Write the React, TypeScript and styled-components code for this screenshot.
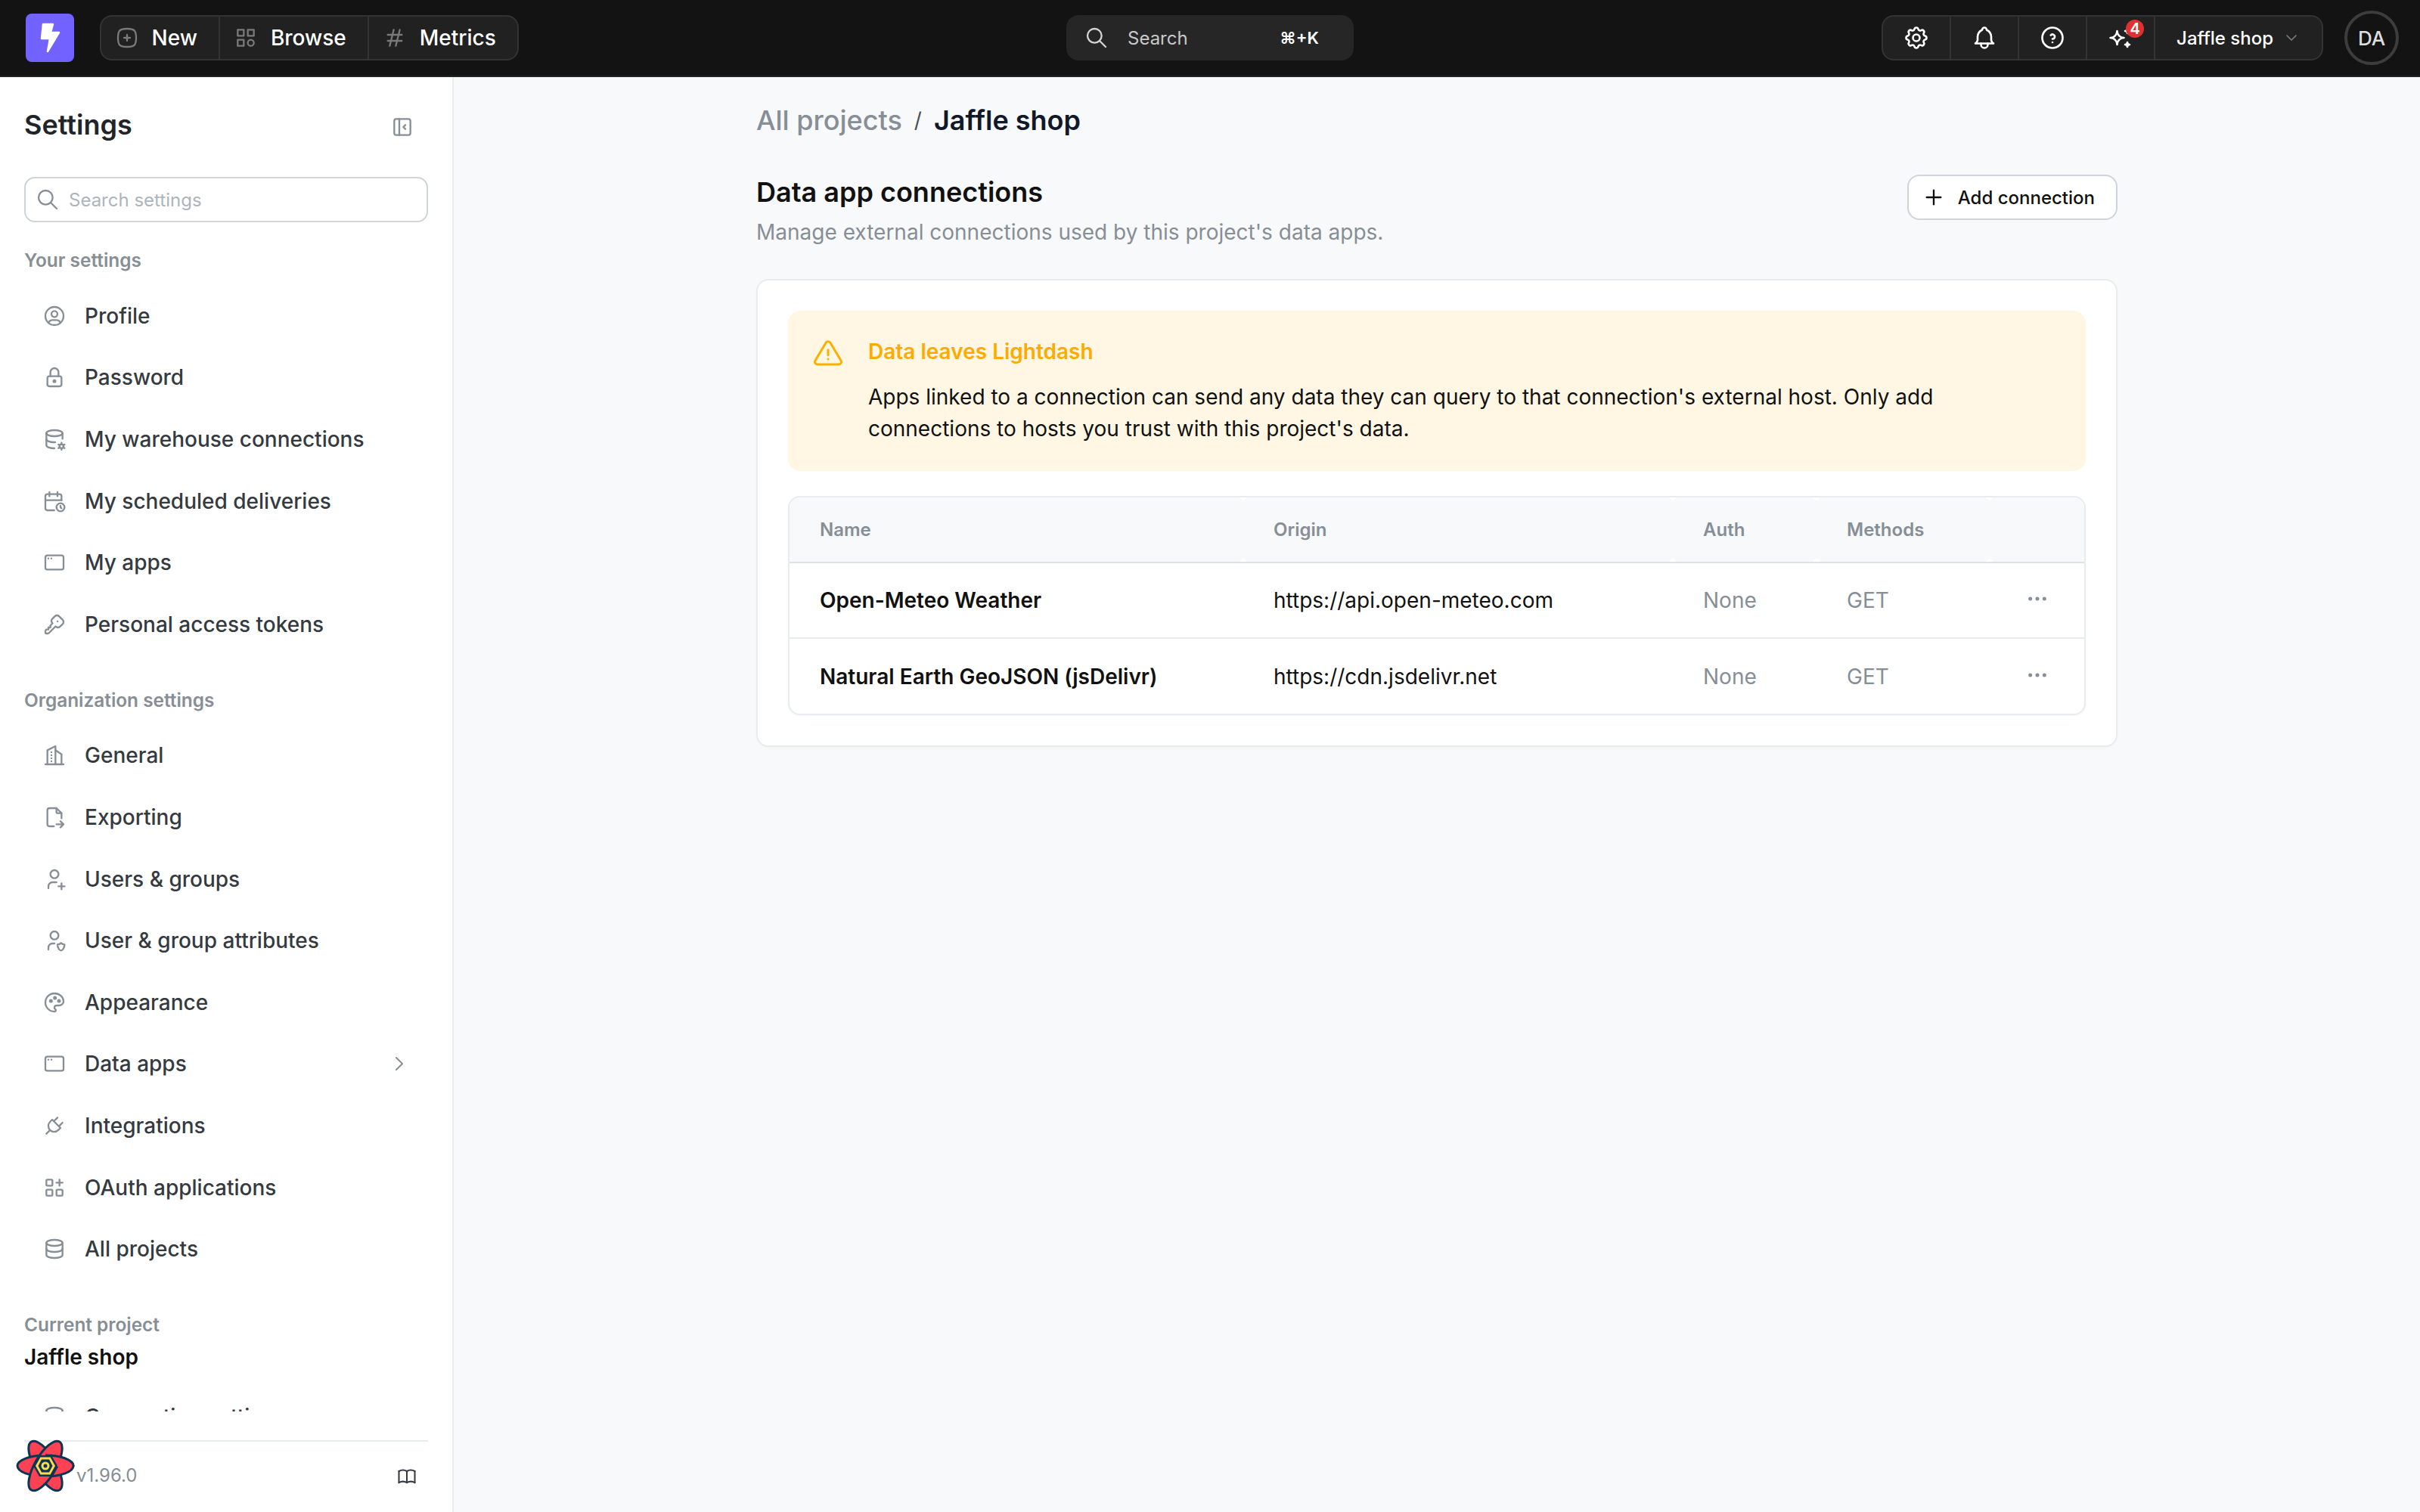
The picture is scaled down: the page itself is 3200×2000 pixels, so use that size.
import React from 'react';
import styled, { createGlobalStyle } from 'styled-components';
import {
  TbAlertTriangle,
  TbAppWindow,
  TbApps,
  TbBell,
  TbBook,
  TbBuildingSkyscraper,
  TbCalendarTime,
  TbCategory,
  TbChevronDown,
  TbChevronRight,
  TbDatabase,
  TbDatabaseCog,
  TbDots,
  TbFileExport,
  TbHash,
  TbHelpCircle,
  TbKey,
  TbLayoutSidebarLeftCollapse,
  TbLock,
  TbPalette,
  TbPlug,
  TbPlus,
  TbSearch,
  TbSettings,
  TbSparkles,
  TbSquareRoundedPlus,
  TbUserCircle,
  TbUserPlus,
  TbUserShield,
} from 'react-icons/tb';

const GlobalStyle = createGlobalStyle`
  html, body {
    margin: 0;
    height: 100%;
    overflow: hidden;
    background: #f8f9fb;
    font-family: Inter, "Liberation Sans", sans-serif;
  }
  * { box-sizing: border-box; }
`;

const Page = styled.div`
  height: 2000px;
  display: flex;
  flex-direction: column;
`;

/* top bar */
const TopBar = styled.header`
  height: 102px;
  flex: none;
  display: grid;
  grid-template-columns: 1fr auto 1fr;
  align-items: center;
  padding: 0 28px;
  background: #131313;
  border-bottom: 2px solid #222;
`;
const TopLeft = styled.div`
  display: flex;
  align-items: center;
  gap: 34px;
  padding-left: 6px;
`;
const LogoBox = styled.div`
  width: 64px;
  height: 64px;
  border-radius: 8px;
  background: #7262ff;
  display: flex;
`;
const ButtonGroup = styled.div`
  height: 60px;
  display: flex;
  border: 2px solid #333;
  border-radius: 16px;
  background: #212121;
  overflow: hidden;
`;
const NavButton = styled.div`
  display: flex;
  align-items: center;
  gap: 16.5px;
  padding: 0 28.5px 0 18px;
  color: #fff;
  font-size: 28px;
  font-weight: 500;
  & + & { border-left: 2px solid #333; }
  svg { color: #7a7a7a; }
`;
const IconButton = styled.div`
  position: relative;
  width: 90px;
  display: flex;
  align-items: center;
  justify-content: center;
  color: #fff;
  border-right: 2px solid #333;
`;
const CountBadge = styled.span`
  position: absolute;
  top: 4px;
  left: 51px;
  width: 24px;
  height: 24px;
  border-radius: 50%;
  background: #e03131;
  color: #fff;
  font-size: 20px;
  font-weight: 600;
  line-height: 24px;
  text-align: center;
`;
const ProjectSelect = styled.div`
  display: flex;
  align-items: center;
  gap: 12px;
  padding: 0 28px;
  color: #fff;
  font-size: 24px;
  font-weight: 500;
  svg { color: #7a7a7a; }
`;
const SearchBox = styled.div`
  width: 380px;
  height: 60px;
  display: flex;
  align-items: center;
  padding: 0 46px 0 24px;
  border-radius: 16px;
  background: #262626;
  color: #c9c9c9;
  font-size: 24px;
  svg { color: #d4d4d4; }
`;
const SearchLabel = styled.span`
  margin-left: 25px;
  flex: 1;
`;
const Shortcut = styled.span`
  color: #fff;
  font-size: 22px;
  font-weight: 600;
`;
const TopRight = styled.div`
  display: flex;
  align-items: center;
  justify-content: flex-end;
  gap: 28px;
`;
const Avatar = styled.div`
  width: 72px;
  height: 72px;
  border-radius: 50%;
  border: 4px solid #3d3d3d;
  display: flex;
  align-items: center;
  justify-content: center;
  color: #dedede;
  font-size: 26px;
  font-weight: 500;
`;

/* sidebar */
const Body = styled.div`
  flex: 1;
  min-height: 0;
  display: flex;
`;
const Sidebar = styled.aside`
  position: relative;
  width: 600px;
  flex: none;
  display: flex;
  flex-direction: column;
  padding: 41px 32px 0;
  background: #fff;
  border-right: 2px solid #e9ecef;
`;
const SidebarHead = styled.div`
  display: flex;
  align-items: center;
  justify-content: space-between;
  padding-right: 18px;
  color: #868e96;
  svg { margin-top: 6px; }
`;
const SidebarTitle = styled.h1`
  margin: 0;
  color: #212529;
  font-size: 36px;
  line-height: 44px;
  font-weight: 600;
`;
const SidebarSearch = styled.div`
  height: 60px;
  margin-top: 47px;
  display: flex;
  align-items: center;
  gap: 12px;
  padding: 0 13px;
  border: 2px solid #ced4da;
  border-radius: 14px;
  color: #adb5bd;
  font-size: 24px;
  svg { color: #868e96; }
`;
const SidebarScroll = styled.div`
  flex: 1;
  min-height: 0;
  overflow: hidden;
`;
const GroupLabel = styled.div<{ $top: number; $bottom: number }>`
  margin-top: ${(p) => p.$top}px;
  margin-bottom: ${(p) => p.$bottom}px;
  color: #868e96;
  font-size: 24.4px;
  line-height: 30px;
  font-weight: 600;
`;
const NavRow = styled.div`
  height: 81.6px;
  display: flex;
  align-items: center;
  gap: 24px;
  padding: 0 22px 0 24px;
  color: #343a40;
  font-size: 28px;
  font-weight: 500;
  svg { flex: none; color: #868e96; }
`;
const NavLabel = styled.span`
  flex: 1;
`;
const ProjectName = styled.div`
  margin: -7px 0 20px;
  color: #111;
  font-size: 28px;
  line-height: 36px;
  font-weight: 600;
`;
const SidebarFooter = styled.div`
  height: 95px;
  flex: none;
  margin-top: 38px;
  display: flex;
  align-items: center;
  justify-content: space-between;
  padding: 0 14px 4px 69px;
  border-top: 2px solid #e9ecef;
  color: #868e96;
  font-size: 24px;
  svg { margin-top: 2px; color: #343a40; }
`;
const DevtoolsBadge = styled.svg`
  position: absolute;
  left: 21px;
  bottom: 26px;
  width: 80px;
  height: 70px;
`;

/* main */
const Main = styled.main`
  flex: 1;
  min-width: 0;
`;
const Content = styled.div`
  width: 1800px;
  margin: 0 auto;
  padding-top: 35px;
`;
const Crumbs = styled.div`
  display: flex;
  align-items: center;
  gap: 16px;
  font-size: 36px;
  line-height: 44px;
  font-weight: 600;
  color: #111827;
`;
const CrumbLink = styled.span`
  color: #868e96;
  font-weight: 500;
`;
const CrumbSep = styled.span`
  color: #495057;
  font-size: 28px;
  font-weight: 400;
`;
const SectionHead = styled.div`
  margin-top: 51px;
  display: flex;
  align-items: flex-start;
  justify-content: space-between;
`;
const SectionTitle = styled.h2`
  margin: 0;
  color: #111;
  font-size: 36px;
  line-height: 44px;
  font-weight: 600;
`;
const SectionText = styled.p`
  margin: 11px 0 0;
  color: #868e96;
  font-size: 28px;
  line-height: 40px;
`;
const AddButton = styled.div`
  height: 60px;
  margin-top: -1px;
  display: flex;
  align-items: center;
  gap: 16px;
  padding: 0 28px 0 17px;
  background: #fff;
  border: 2px solid #ced4da;
  border-radius: 16px;
  color: #111;
  font-size: 24px;
  font-weight: 500;
`;
const Card = styled.section`
  margin-top: 42px;
  padding: 40px;
  background: #fff;
  border: 2px solid #e9ecef;
  border-radius: 16px;
  box-shadow: 0 1px 3px rgba(0, 0, 0, 0.03);
`;
const Alert = styled.div`
  height: 212px;
  display: flex;
  gap: 32px;
  padding: 36px 32px;
  background: #fff7e4;
  border-radius: 16px;
  svg { flex: none; color: #fcb100; }
`;
const AlertTitle = styled.div`
  color: #fcab00;
  font-size: 28px;
  line-height: 36px;
  font-weight: 600;
`;
const AlertText = styled.div`
  margin-top: 21px;
  color: #111;
  font-size: 28px;
  line-height: 42px;
`;
const TableFrame = styled.div`
  margin-top: 33px;
  border: 2px solid #e9ecef;
  border-radius: 16px;
  overflow: hidden;
  box-shadow: 0 1px 3px rgba(0, 0, 0, 0.05);
`;
const Table = styled.table`
  width: 100%;
  table-layout: fixed;
  border-collapse: collapse;
`;
const HeadCell = styled.th<{ $width?: number }>`
  position: relative;
  width: ${(p) => (p.$width ? `${p.$width}px` : 'auto')};
  height: 86px;
  padding: 0 40px;
  background: #f8f9fb;
  border-bottom: 2px solid #dee2e6;
  color: #868e96;
  font-size: 24px;
  font-weight: 600;
  text-align: left;

  /* small white ticks where the resize handles sit */
  &:not(:first-child)::before,
  &:not(:first-child)::after {
    content: '';
    position: absolute;
    left: -5px;
    border-left: 5px solid transparent;
    border-right: 5px solid transparent;
  }
  &:not(:first-child)::before {
    top: 0;
    border-top: 5px solid #fff;
  }
  &:not(:first-child)::after {
    bottom: 0;
    border-bottom: 5px solid #fff;
  }
`;
const Row = styled.tr`
  & + & td { border-top: 2px solid #e9ecef; }
`;
const Cell = styled.td`
  height: 100px;
  padding: 0 40px;
  color: #111;
  font-size: 28px;
`;
const NameCell = styled(Cell)`
  font-weight: 600;
`;
const MutedCell = styled(Cell)`
  color: #868e96;
`;
const ActionCell = styled(Cell)`
  padding: 0;
  text-align: center;
  color: #868e96;
  svg { display: block; margin: -4px auto 0; }
`;

const yourSettings = [
  { label: 'Profile', icon: TbUserCircle },
  { label: 'Password', icon: TbLock },
  { label: 'My warehouse connections', icon: TbDatabaseCog },
  { label: 'My scheduled deliveries', icon: TbCalendarTime },
  { label: 'My apps', icon: TbAppWindow },
  { label: 'Personal access tokens', icon: TbKey },
];

const orgSettings = [
  { label: 'General', icon: TbBuildingSkyscraper },
  { label: 'Exporting', icon: TbFileExport },
  { label: 'Users & groups', icon: TbUserPlus },
  { label: 'User & group attributes', icon: TbUserShield },
  { label: 'Appearance', icon: TbPalette },
  { label: 'Data apps', icon: TbAppWindow, more: true },
  { label: 'Integrations', icon: TbPlug },
  { label: 'OAuth applications', icon: TbApps },
  { label: 'All projects', icon: TbDatabase },
];

const connections = [
  { name: 'Open-Meteo Weather', origin: 'https://api.open-meteo.com' },
  { name: 'Natural Earth GeoJSON (jsDelivr)', origin: 'https://cdn.jsdelivr.net' },
];

type NavItem = { label: string; icon: React.ComponentType<{ size?: number; strokeWidth?: number }>; more?: boolean };

const NavList = ({ items }: { items: NavItem[] }) => (
  <>
    {items.map((item) => (
      <NavRow key={item.label}>
        <item.icon size={32} strokeWidth={1.75} />
        <NavLabel>{item.label}</NavLabel>
        {item.more && <TbChevronRight size={32} strokeWidth={1.5} />}
      </NavRow>
    ))}
  </>
);

const App = () => {
  return (
    <Page>
      <GlobalStyle />
      <TopBar>
        <TopLeft>
          <LogoBox>
            <svg viewBox="0 0 64 64" width="64" height="64">
              <path
                d="M23 14h13l-3 11h11L29 50l3-17H21z"
                fill="#fff"
                stroke="#fff"
                strokeWidth="2.5"
                strokeLinejoin="round"
              />
            </svg>
          </LogoBox>
          <ButtonGroup>
            <NavButton>
              <TbSquareRoundedPlus size={32} strokeWidth={1.75} />
              New
            </NavButton>
            <NavButton>
              <TbCategory size={32} strokeWidth={1.75} />
              Browse
            </NavButton>
            <NavButton>
              <TbHash size={32} strokeWidth={1.75} />
              Metrics
            </NavButton>
          </ButtonGroup>
        </TopLeft>
        <SearchBox>
          <TbSearch size={32} strokeWidth={1.75} />
          <SearchLabel>Search</SearchLabel>
          <Shortcut>⌘+K</Shortcut>
        </SearchBox>
        <TopRight>
          <ButtonGroup>
            <IconButton>
              <TbSettings size={36} strokeWidth={1.75} />
            </IconButton>
            <IconButton>
              <TbBell size={36} strokeWidth={1.75} />
            </IconButton>
            <IconButton>
              <TbHelpCircle size={36} strokeWidth={1.75} />
            </IconButton>
            <IconButton>
              <TbSparkles size={36} strokeWidth={1.75} />
              <CountBadge>4</CountBadge>
            </IconButton>
            <ProjectSelect>
              Jaffle shop
              <TbChevronDown size={24} strokeWidth={1.75} />
            </ProjectSelect>
          </ButtonGroup>
          <Avatar>DA</Avatar>
        </TopRight>
      </TopBar>
      <Body>
        <Sidebar>
          <SidebarHead>
            <SidebarTitle>Settings</SidebarTitle>
            <TbLayoutSidebarLeftCollapse size={32} strokeWidth={1.75} />
          </SidebarHead>
          <SidebarSearch>
            <TbSearch size={32} strokeWidth={1.75} />
            Search settings
          </SidebarSearch>
          <SidebarScroll>
            <GroupLabel $top={35} $bottom={18}>
              Your settings
            </GroupLabel>
            <NavList items={yourSettings} />
            <GroupLabel $top={44} $bottom={18}>
              Organization settings
            </GroupLabel>
            <NavList items={orgSettings} />
            <GroupLabel $top={44.5} $bottom={17}>
              Current project
            </GroupLabel>
            <ProjectName>Jaffle shop</ProjectName>
            <NavList items={[{ label: 'Connection settings', icon: TbDatabase }]} />
          </SidebarScroll>
          <SidebarFooter>
            <span>v1.96.0</span>
            <TbBook size={28} strokeWidth={1.75} />
          </SidebarFooter>
          <DevtoolsBadge viewBox="0 0 80 70">
            <defs>
              <clipPath id="devtools-weave">
                <path d="M39 36L80 36V0H39z" />
              </clipPath>
            </defs>
            <g fill="#ff4154" stroke="#0b3554" strokeWidth="3">
              <ellipse cx="39" cy="35" rx="37" ry="14" transform="rotate(60 39 35)" />
              <ellipse cx="39" cy="35" rx="37" ry="14" />
              <ellipse cx="39" cy="35" rx="37" ry="14" transform="rotate(-60 39 35)" />
              <ellipse cx="39" cy="35" rx="37" ry="14" clipPath="url(#devtools-weave)" />
            </g>
            <path d="M23 35l8-14h16l8 14-8 14H31z" fill="#0b3554" />
            <path d="M26 35l6.500-11.500h13l6.500 11.500-6.500 11.500h-13z" fill="#ffd94c" />
            <path d="M29.500 35l4.500-8.500h10l4.500 8.500-4.500 8.500h-10z" fill="#0b3554" />
            <circle cx="39" cy="35" r="5.500" fill="#ffd94c" />
            <circle cx="39" cy="35" r="2.500" fill="#0b3554" />
          </DevtoolsBadge>
        </Sidebar>
        <Main>
          <Content>
            <Crumbs>
              <CrumbLink>All projects</CrumbLink>
              <CrumbSep>/</CrumbSep>
              Jaffle shop
            </Crumbs>
            <SectionHead>
              <div>
                <SectionTitle>Data app connections</SectionTitle>
                <SectionText>Manage external connections used by this project's data apps.</SectionText>
              </div>
              <AddButton>
                <TbPlus size={32} strokeWidth={1.75} />
                Add connection
              </AddButton>
            </SectionHead>
            <Card>
              <Alert>
                <TbAlertTriangle size={42} strokeWidth={1.75} />
                <div>
                  <AlertTitle>Data leaves Lightdash</AlertTitle>
                  <AlertText>
                    Apps linked to a connection can send any data they can query to that connection's external host.
                    Only add
                    <br />
                    connections to hosts you trust with this project's data.
                  </AlertText>
                </div>
              </Alert>
              <TableFrame>
                <Table>
                  <thead>
                    <tr>
                      <HeadCell $width={600}>Name</HeadCell>
                      <HeadCell $width={568}>Origin</HeadCell>
                      <HeadCell $width={190}>Auth</HeadCell>
                      <HeadCell $width={229}>Methods</HeadCell>
                      <HeadCell />
                    </tr>
                  </thead>
                  <tbody>
                    {connections.map((c) => (
                      <Row key={c.name}>
                        <NameCell>{c.name}</NameCell>
                        <Cell>{c.origin}</Cell>
                        <MutedCell>None</MutedCell>
                        <MutedCell>GET</MutedCell>
                        <ActionCell>
                          <TbDots size={32} strokeWidth={1.75} />
                        </ActionCell>
                      </Row>
                    ))}
                  </tbody>
                </Table>
              </TableFrame>
            </Card>
          </Content>
        </Main>
      </Body>
    </Page>
  );
};

export default App;
